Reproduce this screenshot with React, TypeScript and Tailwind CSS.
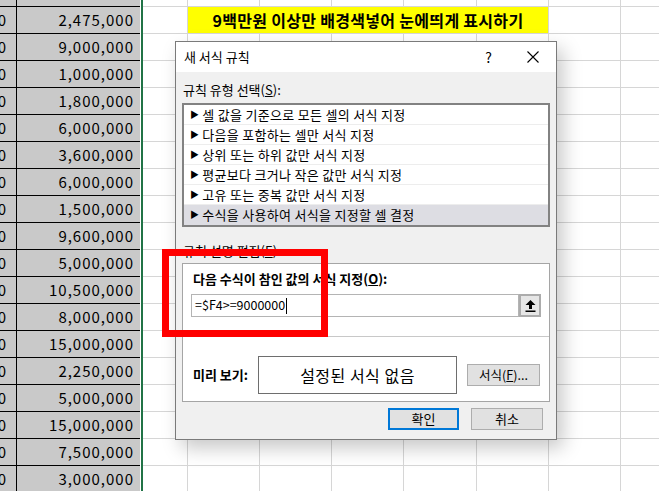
import React from "react";

const amounts = [
  "2,475,000",
  "9,000,000",
  "1,000,000",
  "1,800,000",
  "6,000,000",
  "3,600,000",
  "6,000,000",
  "1,500,000",
  "9,600,000",
  "5,000,000",
  "10,500,000",
  "8,000,000",
  "15,000,000",
  "2,250,000",
  "5,000,000",
  "15,000,000",
  "7,500,000",
  "3,000,000",
];

const rightCols = [72, 72, 72, 73, 72, 72];

const ruleTypes = [
  "셀 값을 기준으로 모든 셀의 서식 지정",
  "다음을 포함하는 셀만 서식 지정",
  "상위 또는 하위 값만 서식 지정",
  "평균보다 크거나 작은 값만 서식 지정",
  "고유 또는 중복 값만 서식 지정",
  "수식을 사용하여 서식을 지정할 셀 결정",
];

function SheetRow({ amount, height, index }: { amount?: string; height: string; index: number }) {
  return (
    <div className={`flex ${height}`}>
      <div className="flex w-[17px] shrink-0 items-center justify-end overflow-hidden border-r border-b border-black bg-[#c9c9c9] pr-[9px] tracking-[1px]">
        {amount && <span className="whitespace-nowrap">00</span>}
      </div>
      <div className="flex w-[123px] shrink-0 items-center justify-end border-b border-black bg-[#c9c9c9] pr-[6px] tracking-[1px]">
        {amount}
      </div>
      <div className="w-[1px] shrink-0 bg-white" />
      <div className="w-[2px] shrink-0 bg-[#217346]" />
      <div className="w-[45px] shrink-0 border-r border-b border-[#d6d6d6]" />
      {index === 1 ? (
        <>
          <div className="flex w-[361px] shrink-0 items-center justify-center border-r border-b border-[#d6d6d6] bg-[#ffff00] text-[16px] font-bold tracking-[0.3px] text-black">
            9백만원 이상만 배경색넣어 눈에띄게 표시하기
          </div>
          <div className="w-[72px] shrink-0 border-r border-b border-[#d6d6d6]" />
        </>
      ) : (
        rightCols.map((w, i) => (
          <div
            key={i}
            className={`shrink-0 border-r border-b border-[#d6d6d6] ${w === 73 ? "w-[73px]" : "w-[72px]"}`}
          />
        ))
      )}
      <div className="flex-1 border-b border-[#d6d6d6]" />
    </div>
  );
}

function UploadIcon() {
  return (
    <svg width="11" height="12" viewBox="0 0 11 12">
      <polygon points="5.5,0 10.5,5 7,5 7,9 4,9 4,5 0.5,5" fill="#000" />
      <rect x="0.5" y="10.5" width="10" height="1.5" fill="#000" />
    </svg>
  );
}

function CloseIcon() {
  return (
    <svg width="12" height="12" viewBox="0 0 12 12">
      <path d="M0.5 0.5 L11.5 11.5 M11.5 0.5 L0.5 11.5" stroke="#000" strokeWidth="1.1" fill="none" />
    </svg>
  );
}

function RuleDialog() {
  return (
    <div className="absolute left-[175px] top-[41px] flex h-[399px] w-[382px] flex-col border border-[#7a7a7a] bg-[#f0f0f0] shadow-[6px_8px_18px_rgba(0,0,0,0.22)]">
      {/* title bar */}
      <div className="flex h-[30px] shrink-0 items-center bg-white pl-[8px] text-[13px] text-black">
        <span>새 서식 규칙</span>
        <div className="ml-auto flex h-full">
          <div className="flex w-[46px] items-center justify-center pl-[3px] text-[14px]">?</div>
          <div className="flex w-[46px] items-center justify-center">
            <CloseIcon />
          </div>
        </div>
      </div>

      <div className="flex flex-col px-[6px] text-[13px] text-black">
        <div className="mt-[10px] pl-[1px] leading-[16px]">
          규칙 유형 선택(<span className="underline">S</span>):
        </div>

        <div className="mt-[5px] flex h-[124px] flex-col border-2 border-[#828282] bg-white">
          {ruleTypes.map((t, i) => (
            <div
              key={t}
              className={`flex h-[20px] shrink-0 items-center pl-[6px] tracking-[0.3px] ${
                i === ruleTypes.length - 1 ? "bg-[#dddde3]" : "border-b border-[#ededed]"
              }`}
            >
              <span className="mr-[3px] text-[9px]">▶</span>
              {t}
            </div>
          ))}
        </div>

        <div className="mt-[16px] pl-[1px] leading-[16px]">
          규칙 설명 편집(<span className="underline">E</span>):
        </div>

        <div className="mt-[4px] flex h-[139px] flex-col border border-[#a5a5a5] bg-white">
          <div className="mt-[7px] pl-[10px] font-bold leading-[16px]">
            다음 수식이 참인 값의 서식 지정(<span className="underline">O</span>):
          </div>
          <div className="mx-[8px] mt-[7px] flex h-[23px]">
            <div className="flex flex-1 items-center border border-[#b4b4b4] pl-[3px] text-[12.5px]">
              =$F4&gt;=9000000
              <span className="ml-[1px] h-[16px] w-[1px] bg-black" />
            </div>
            <div className="flex w-[22px] items-center justify-center border-2 border-[#acacac] bg-[#e6e6e6]">
              <UploadIcon />
            </div>
          </div>
          <div className="mt-[19px] h-px bg-[#c8c8c8]" />
          <div className="mt-[19px] flex items-center pl-[10px]">
            <span className="w-[65px] font-bold">미리 보기:</span>
            <div className="flex h-[38px] w-[199px] items-center justify-center border border-[#6e6e6e] text-[16px] tracking-[0.5px]">
              설정된 서식 없음
            </div>
            <div className="ml-[10px] flex h-[22px] w-[73px] items-center justify-center border border-[#adadad] bg-[#e1e1e1] text-[12.5px]">
              서식(<span className="underline">F</span>)...
            </div>
          </div>
        </div>

        <div className="mt-[6px] flex justify-end gap-[12px] pr-[7px]">
          <div className="flex h-[22px] w-[71px] items-center justify-center border-2 border-[#0078d7] bg-[#e1e1e1]">
            확인
          </div>
          <div className="flex h-[22px] w-[72px] items-center justify-center border border-[#adadad] bg-[#e1e1e1]">
            취소
          </div>
        </div>
      </div>
    </div>
  );
}

export default function App() {
  return (
    <div className="relative h-[491px] w-[659px] overflow-hidden bg-white font-['Noto_Sans_CJK_KR','Noto_Sans',sans-serif] text-[15px] text-black">
      <div className="flex flex-col">
        <SheetRow height="h-[7px]" index={0} />
        {amounts.map((a, i) => (
          <SheetRow key={i} amount={a} height="h-[27px]" index={i + 1} />
        ))}
      </div>

      <RuleDialog />

      {/* red highlight box */}
      <div className="absolute left-[162px] top-[249px] h-[88px] w-[166px] border-[7px] border-[#ff0000]" />
    </div>
  );
}
